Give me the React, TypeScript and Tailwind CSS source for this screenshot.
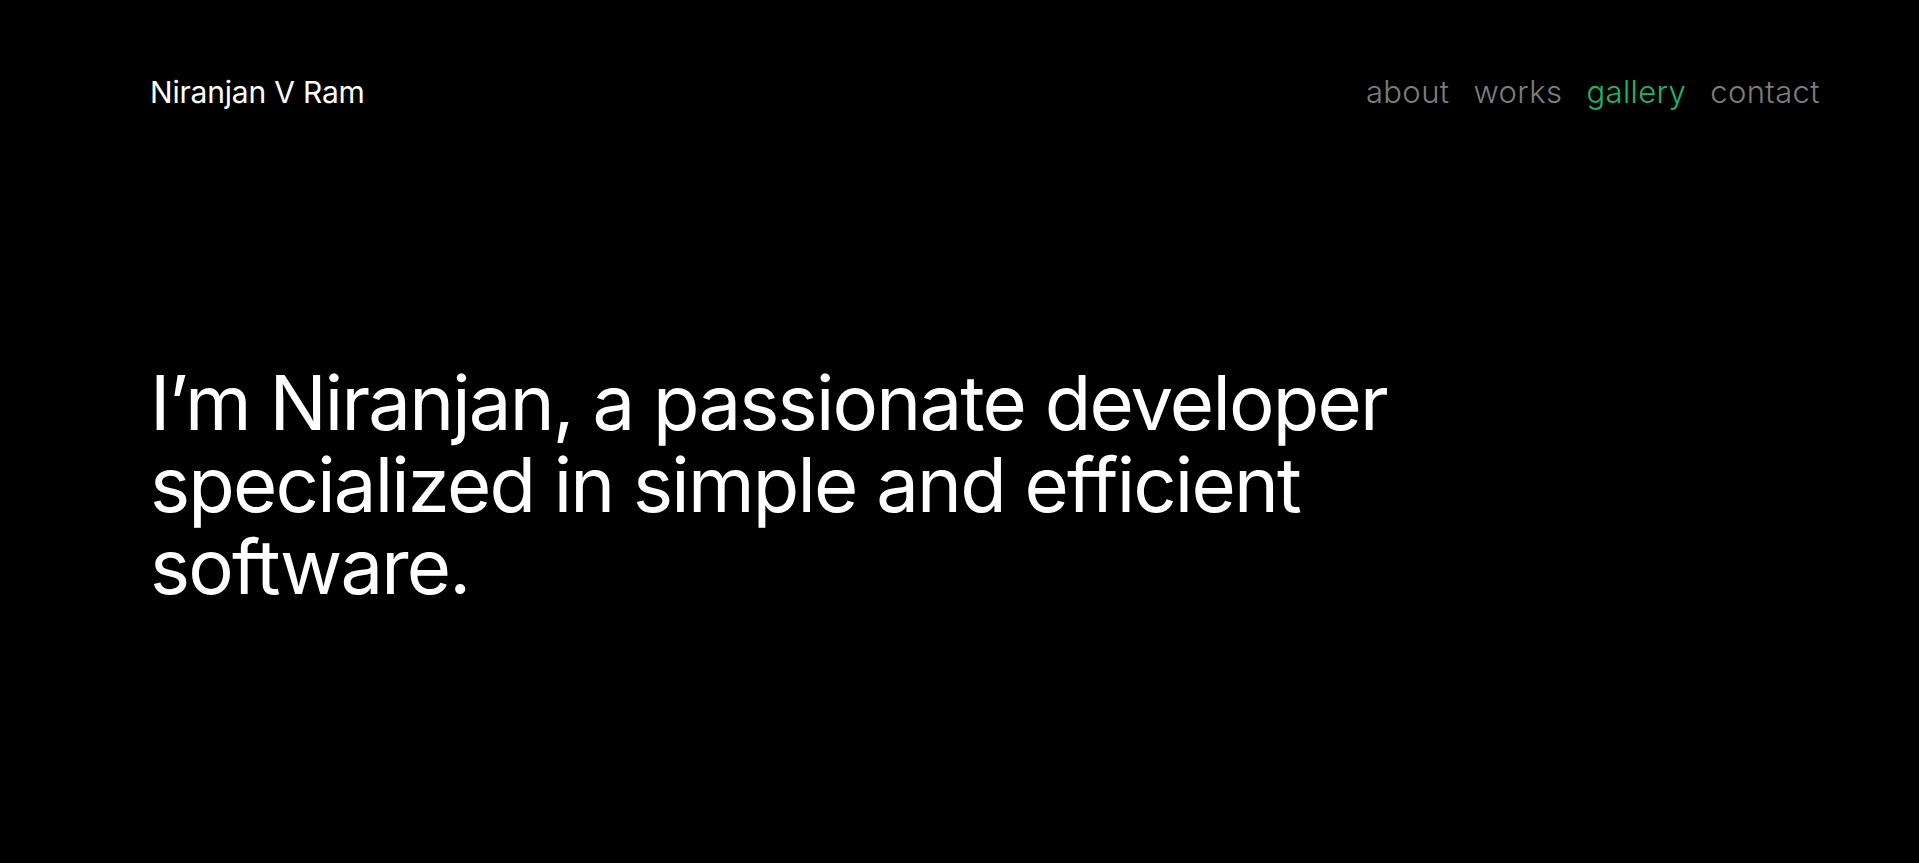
import React from "react";

export default function App() {
  return (
    <div
      className="min-h-[863px] w-full bg-black text-white"
      style={{ fontFamily: "Inter, 'Noto Sans', sans-serif" }}
    >
      <header className="flex items-center justify-between pl-[150px] pr-[99px] pt-[74px]">
        <div className="text-[30px] leading-[36px] tracking-[-0.2px]">Niranjan V Ram</div>
        <nav className="flex items-center gap-[24px] text-[31px] font-light leading-[36px] tracking-[0.4px]">
          <a className="text-[#7d7d7d]">about</a>
          <a className="text-[#7d7d7d]">works</a>
          <a className="text-[#12bb6a]">gallery</a>
          <a className="text-[#7d7d7d]">contact</a>
        </nav>
      </header>
      <main className="px-[150px] pt-[251px]">
        <h1 className="max-w-[1400px] text-[76px] font-normal leading-[82px] tracking-[-1.8px]">
          I’m Niranjan, a passionate developer
          <br />
          specialized in simple and efficient
          <br />
          software.
        </h1>
      </main>
    </div>
  );
}
